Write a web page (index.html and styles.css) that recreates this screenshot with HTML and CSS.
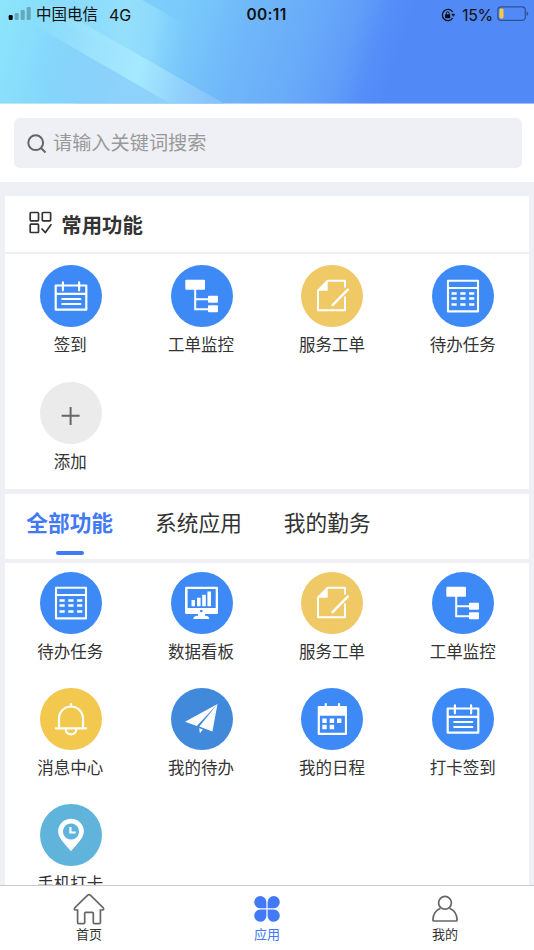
FILE: index.html
```html
<!DOCTYPE html>
<html lang="zh-CN">
<head>
<meta charset="utf-8">
<title>应用</title>
<link rel="stylesheet" href="styles.css">
</head>
<body>
<svg class="defs" width="0" height="0">
  <defs>
    <symbol id="calendar" viewBox="0 0 62 62"><path d="M15.7 20.5h30.6v24.2H15.7zM15.7 28.9h30.6" fill="none" stroke="#fff" stroke-width="2.2" stroke-linejoin="round"/><path d="M22.9 17.3v8M39.1 17.3v8M22.3 34h18M22.3 39h18" stroke="#fff" stroke-width="2.2" stroke-linecap="round"/></symbol>
    <symbol id="tree" viewBox="0 0 62 62"><g fill="#fff"><rect x="14.3" y="14.7" width="19.7" height="10" rx="1"/><rect x="37" y="30.7" width="10" height="7" rx="1"/><rect x="37" y="40.3" width="10" height="7" rx="1"/></g><path d="M24.2 24v20.2H38M24.2 34.2H38" fill="none" stroke="#fff" stroke-width="2"/></symbol>
    <symbol id="doc" viewBox="0 0 62 62"><path d="M44 22.5v-6.7H26.7L17 25.5V45.2h27V31.5" fill="none" stroke="#fff" stroke-width="2" stroke-linejoin="round"/><path d="M16.3 25.7 26.7 15v10.7z" fill="#fff"/><path d="M31.6 40.2 46.8 24.6" stroke="#fff" stroke-width="2.4" stroke-linecap="round"/></symbol>
    <symbol id="table" viewBox="0 0 62 62"><path d="M16 15.8h30v30.6H16zM16 23h30" fill="none" stroke="#fff" stroke-width="2.1" stroke-linejoin="round"/><path d="M19.5 28.6h5.2M28.3 28.6h5.2M37.1 28.6h5.2M19.5 33.4h5.2M28.3 33.4h5.2M37.1 33.4h5.2M19.5 39.4h5.2M28.3 39.4h5.2M37.1 39.4h5.2" stroke="#fff" stroke-width="2.5"/></symbol>
    <symbol id="monitor" viewBox="0 0 62 62"><path fill="#fff" fill-rule="evenodd" d="M15.3 14.7h30.4q1.3 0 1.3 1.3v24.7q0 1.3-1.3 1.3H15.300q-1.300 0-1.300-1.300V16q0-1.300 1.300-1.300zM16.600 17v19h28.100V17zM30.300 37.700a1.300 1.300 0 1 0 .01 0z"/><path fill="#fff" d="M20.500 28H24v6.200h-3.500zM26 25.800h3.600v8.400H26zM31.200 22.800h3.600v11.400h-3.600zM36.400 19.600H40v14.600h-3.600zM27 41.500h7v3h-7zM22.300 47q0-3 4-3.200h8q4 .2 4 3.200z"/></symbol>
    <symbol id="bell" viewBox="0 0 62 62"><path d="M15.800 40.300h30.400M19 40V30.500a12 12 0 0 1 24 0V40M31 18v-2M25.700 41.300a5.300 5 0 0 0 10.600 0" fill="none" stroke="#fff" stroke-width="2.200" stroke-linecap="round"/></symbol>
    <symbol id="plane" viewBox="0 0 62 62"><path fill="#fff" d="M14 33.800 46.500 16 25.800 38zM46.500 16 41.400 43.400 28.300 38.600zM28.200 40.200l3.700 1.300-3 3.800z"/></symbol>
    <symbol id="date" viewBox="0 0 62 62"><path fill="#fff" fill-rule="evenodd" d="M17.700 18H45q1 0 1 1v27q0 1-1 1H17.700q-1 0-1-1V19q0-1 1-1zM18.900 27.700v17.100h25V27.700z"/><path d="M24.800 16v4M38 16v4" stroke="#fff" stroke-width="2.200" stroke-linecap="round"/><path fill="#fff" d="M21.300 30.500h4.400v4.400h-4.400zM28.700 30.500h4.400v4.400h-4.400zM36 30.500h4.400v4.400H36zM21.300 36.800h4.400v4.400h-4.400zM28.700 36.800h4.400v4.400h-4.400z"/></symbol>
    <symbol id="pin" viewBox="0 0 62 62"><path fill="#fff" fill-rule="evenodd" d="M31 14.700a12.900 12.900 0 0 1 12.900 12.900C43.900 34.500 35.500 41.500 31 47.300C26.500 41.500 18.100 34.500 18.100 27.600A12.900 12.900 0 0 1 31 14.700zM31 19.500a8 8 0 1 0 .01 0z"/><path d="M30.400 23v5.500h5.300" fill="none" stroke="#fff" stroke-width="2.200"/></symbol>
    <symbol id="plus" viewBox="0 0 62 62"><path d="M30.600 25v18M21.600 33.800h18" stroke="#666" stroke-width="2"/></symbol>
  </defs>
</svg>

<header class="hero">
  <svg class="hero-art" viewBox="0 0 534 104" preserveAspectRatio="none">
    <defs>
      <linearGradient id="sky" gradientUnits="userSpaceOnUse" x1="0" y1="0" x2="380" y2="120">
        <stop offset="0" stop-color="#8ce6fb"/><stop offset=".18" stop-color="#84d7fb"/><stop offset=".45" stop-color="#7acafb"/><stop offset=".6" stop-color="#70b8f9"/><stop offset=".77" stop-color="#68aaf8"/><stop offset=".87" stop-color="#609df8"/><stop offset=".94" stop-color="#558ef8"/><stop offset="1" stop-color="#5189f7"/>
      </linearGradient>
      <linearGradient id="beam" gradientUnits="userSpaceOnUse" x1="30" y1="20" x2="220" y2="70">
        <stop offset="0" stop-color="#98e6fc" stop-opacity="0"/><stop offset=".35" stop-color="#a0e4fd" stop-opacity=".9"/><stop offset=".6" stop-color="#a5e9ff"/><stop offset=".85" stop-color="#8fcffc"/><stop offset="1" stop-color="#88c3fb"/>
      </linearGradient>
      <linearGradient id="glow" gradientUnits="userSpaceOnUse" x1="30" y1="0" x2="190" y2="20">
        <stop offset="0" stop-color="#92e3fc" stop-opacity="0"/><stop offset=".6" stop-color="#97e1fc" stop-opacity=".9"/><stop offset=".78" stop-color="#93ddfc" stop-opacity=".8"/><stop offset="1" stop-color="#82cbfb" stop-opacity="0"/>
      </linearGradient>
      <linearGradient id="shade" gradientUnits="userSpaceOnUse" x1="25" y1="60" x2="120" y2="90">
        <stop offset="0" stop-color="#8acdfb" stop-opacity="0"/><stop offset="1" stop-color="#8fd3fb" stop-opacity=".9"/>
      </linearGradient>
    </defs>
    <path fill="url(#sky)" d="M0 0h534v104H0z"/>
    <path fill="url(#glow)" d="M0 0h142L220 44V104L20 0z"/>
    <path fill="url(#shade)" d="M20 17 170 104H74L20 72z"/>
    <path fill="url(#beam)" d="M20 17V0H42L224 104h-54z"/>
  </svg>
  <div class="status">
    <div class="carrier">
      <svg width="23" height="14" viewBox="0 0 23 14"><rect x=".7" y="9" width="4" height="5" rx="1.200"/><g opacity=".25"><rect x="6.700" y="7" width="4" height="7" rx="1.200"/><rect x="12.700" y="4" width="4" height="10" rx="1.200"/><rect x="18.700" y="1" width="4" height="13" rx="1.200"/></g></svg>
      <span class="operator">中国电信</span><span>4G</span>
    </div>
    <div class="time">00:11</div>
    <div class="power">
      <svg width="14" height="14" viewBox="0 0 14 14"><path d="M11.700 4A5.600 5.600 0 1 0 11.700 10" fill="none" stroke="#111" stroke-width="1.300"/><path d="M10.600 6h3.300l-1.600 2.600z" fill="#111" stroke="#111" stroke-width=".4"/><path d="M4.200 6.400h5v3.800h-5z"/><path d="M5.300 6.500V5.200a1.400 1.400 0 0 1 2.800 0v1.300" fill="none" stroke="#111"/></svg>
      <span>15%</span>
      <svg width="32" height="16" viewBox="0 0 32 16"><rect x=".8" y=".9" width="27.500" height="13.500" rx="3.500" fill="none" stroke="#1b2c50" stroke-opacity=".6" stroke-width="1.200"/><rect x="2.500" y="2.600" width="4" height="10" rx="1.500" fill="#fbcb3c"/><path d="M29.600 5.300q3.500 2.400 0 4.800z" fill="#1b2c50" opacity=".6"/></svg>
    </div>
  </div>
</header>

<section class="search-area">
  <div class="search">
    <svg width="20" height="20" viewBox="0 0 20 20"><circle cx="8.700" cy="8.700" r="7.400"/><path d="m14 14 4.500 4.500"/></svg>
    <span>请输入关键词搜索</span>
  </div>
</section>

<main class="content">
  <h2 class="panel heading">
    <svg width="24" height="24" viewBox="0 0 24 24"><rect x="1.200" y="1.500" width="8.300" height="8.300" rx=".8"/><rect x="13.300" y="1.500" width="8.300" height="8.300" rx=".8"/><rect x="1.200" y="13.200" width="8.300" height="8.300" rx=".8"/><path d="m13 18 3.400 3.600 5.500-7.800"/></svg>
    <span>常用功能</span>
  </h2>
  <div class="panel grid common">
    <div class="app"><svg class="disc"><use href="#calendar"/></svg><span>签到</span></div>
    <div class="app"><svg class="disc"><use href="#tree"/></svg><span>工单监控</span></div>
    <div class="app"><svg class="disc sand"><use href="#doc"/></svg><span>服务工单</span></div>
    <div class="app"><svg class="disc"><use href="#table"/></svg><span>待办任务</span></div>
    <div class="app"><svg class="disc gray"><use href="#plus"/></svg><span>添加</span></div>
  </div>
  <nav class="panel tabs">
    <span class="tab active">全部功能</span><span class="tab">系统应用</span><span class="tab">我的勤务</span>
  </nav>
  <div class="panel grid all">
    <div class="app"><svg class="disc"><use href="#table"/></svg><span>待办任务</span></div>
    <div class="app"><svg class="disc"><use href="#monitor"/></svg><span>数据看板</span></div>
    <div class="app"><svg class="disc sand"><use href="#doc"/></svg><span>服务工单</span></div>
    <div class="app"><svg class="disc"><use href="#tree"/></svg><span>工单监控</span></div>
    <div class="app"><svg class="disc gold"><use href="#bell"/></svg><span>消息中心</span></div>
    <div class="app"><svg class="disc ocean"><use href="#plane"/></svg><span>我的待办</span></div>
    <div class="app"><svg class="disc"><use href="#date"/></svg><span>我的日程</span></div>
    <div class="app"><svg class="disc"><use href="#calendar"/></svg><span>打卡签到</span></div>
    <div class="app"><svg class="disc cyan"><use href="#pin"/></svg><span>手机打卡</span></div>
  </div>
</main>

<footer class="tabbar">
  <div class="item"><svg width="32" height="32" viewBox="0 0 32 32"><path d="M16 1.600q.7 0 1.300.6L30.400 15q.8 1.700-1 2h-2v12.500q0 1.200-1.200 1.200h-4.700q-1.200 0-1.200-1.200V20.300q0-1-1-1h-6.600q-1 0-1 1v9.200q0 1.200-1.200 1.200H5.800q-1.200 0-1.200-1.200V17h-2q-1.800-.3-1-2L14.700 2.200q.6-.6 1.300-.6z"/></svg><span>首页</span></div>
  <div class="item current"><svg width="32" height="32" viewBox="0 0 32 32"><path d="M15.400 15.300H9A6.100 6.100 0 1 1 15.400 9zM16.600 15.300H23A6.100 6.100 0 1 0 16.600 9zM15.400 16.600H9A6.100 6.100 0 1 0 15.400 23zM16.600 16.600H23A6.100 6.100 0 1 1 16.600 23z"/></svg><span>应用</span></div>
  <div class="item"><svg width="32" height="32" viewBox="0 0 32 32"><circle cx="16" cy="9.800" r="6.400"/><path d="M11.500 15.200Q4.200 18 3.900 27q0 1 1 1h22.200q1 0 1-1-.3-9-7.600-11.800"/></svg><span>我的</span></div>
</footer>
</body>
</html>
```

FILE: styles.css
```css
* { box-sizing: border-box; }
body {
  margin: 0;
  width: 534px;
  height: 950px;
  display: flex;
  flex-direction: column;
  overflow: hidden;
  background: #eff0f5;
  color: #333;
  font-family: "Noto Sans CJK SC", sans-serif;
}
svg { display: block; flex: none; }
.defs { position: absolute; }

.hero { position: relative; flex: none; height: 103.5px; overflow: hidden; }
.hero-art { position: absolute; inset: 0; width: 100%; height: 100%; }
.status {
  position: relative;
  display: grid;
  grid-template-columns: 1fr auto 1fr;
  align-items: center;
  height: 29px;
  padding: 0 6px 0 8px;
  color: #111;
  font: 16px/20px Inter, "Noto Sans CJK SC", sans-serif;
}
.carrier { display: flex; align-items: center; }
.carrier svg { margin-top: -3px; }
.operator { margin: 0 11px 0 5px; font-size: 15.5px; }
.time { margin-left: -3px; font-weight: 600; font-size: 15.5px; letter-spacing: .3px; }
.power { display: flex; align-items: center; justify-content: flex-end; }
.power span { margin: 0 4px 0 7px; letter-spacing: -.3px; }
.power svg:last-child { margin: -2px -1px 0 0; }

.search-area { flex: none; height: 78.5px; padding: 14.5px 12px 0 14px; background: #fff; }
.search {
  display: flex;
  align-items: center;
  height: 50px;
  padding-left: 12.5px;
  border-radius: 6px;
  background: #eff0f5;
  color: #999;
  font-size: 19.2px;
  line-height: 28px;
}
.search svg { margin: 1px 6.5px 0 0; fill: none; stroke: #666; stroke-width: 2; }
.search span { margin-top: -2px; }

.content {
  flex: 1;
  min-height: 0;
  overflow: hidden;
  display: flex;
  flex-direction: column;
  padding: 14px 5.3px 0;
}
.panel { flex: none; background: #fff; }
.heading {
  display: flex;
  align-items: center;
  height: 56px;
  margin: 0 0 2px;
  padding: 0 0 1px 23.5px;
  font-size: 20.4px;
  font-weight: 700;
  line-height: 30px;
}
.heading svg { margin: -2px 8.500px 0 0; fill: none; stroke: #333; stroke-width: 1.7; stroke-linecap: round; stroke-linejoin: round; }
.heading span { padding-top: 1px; }
.grid { display: grid; grid-template-columns: repeat(4, 1fr); align-content: start; }
.common { height: 235px; padding-top: 10.5px; grid-auto-rows: 117.5px; }
.all { height: 360px; padding-top: 9px; grid-auto-rows: 116px; }
.app { display: flex; flex-direction: column; align-items: center; font-size: 16.5px; line-height: 24px; }
.app span { margin: 5px 1px 0 0; }
.disc { width: 62px; height: 62px; border-radius: 50%; background: #3d8af7; }
.sand { background: #f0c967; }
.gold { background: #f2c84e; }
.ocean { background: #4089db; }
.cyan { background: #60b4db; }
.gray { background: #ebebeb; }

.tabs { display: flex; gap: 42px; height: 65px; margin: 5px 0 4px; padding: 11px 0 0 21px; font-size: 21.7px; line-height: 34px; }
.tab { display: flex; flex-direction: column; align-items: center; }
.active { color: #4179f7; font-weight: 700; }
.active::after { content: ""; width: 28px; height: 4px; margin-top: 12px; border-radius: 2px; background: #4179f7; }

.tabbar {
  flex: none;
  display: grid;
  grid-template-columns: repeat(3, 1fr);
  height: 65px;
  padding-top: 7px;
  border-top: 1px solid #c9c9cb;
  background: #fff;
}
.item { display: flex; flex-direction: column; align-items: center; font-size: 13px; line-height: 18px; }
.item svg { fill: none; stroke: #666; stroke-width: 1.7; }
.current { color: #4179f7; }
.current svg { fill: #4179f7; stroke: none; }
```
